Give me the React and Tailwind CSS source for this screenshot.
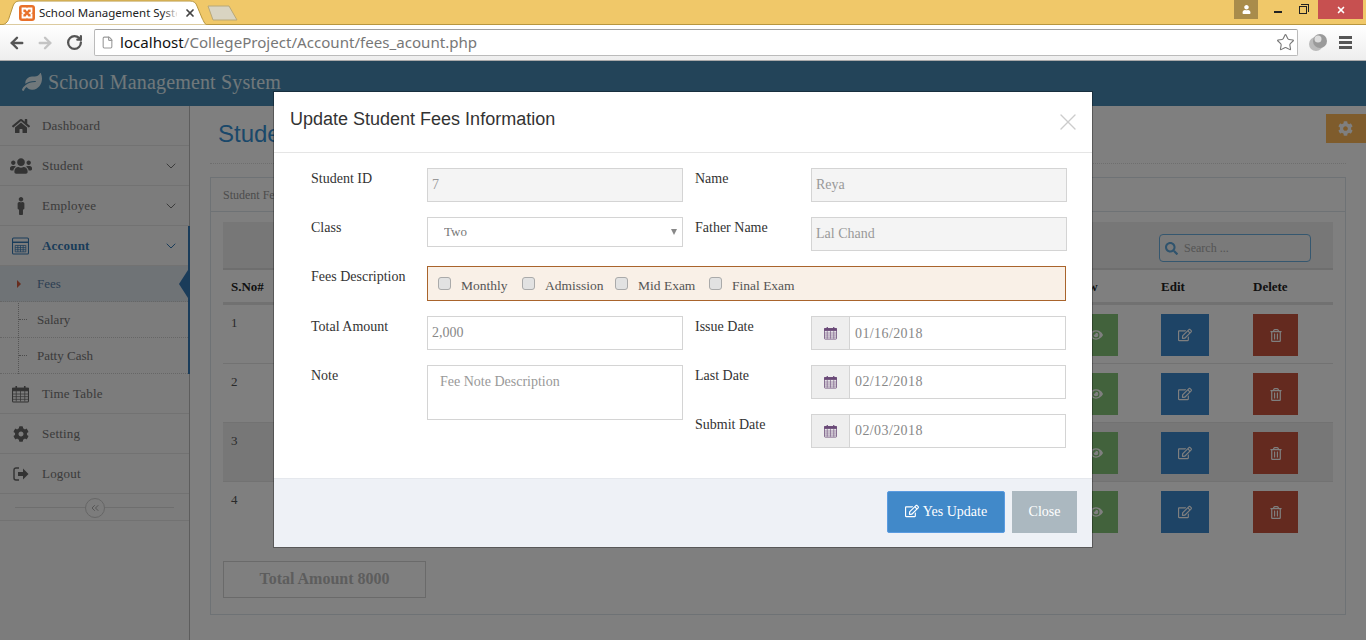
import React from 'react';
import { ArrowLeft, ArrowRight, RotateCw, Star, ChevronDown, ChevronsLeft, X, File } from 'lucide-react';
import { FaHome, FaUsers, FaMale, FaCog, FaLeaf, FaRegEdit, FaEye, FaRegTrashAlt, FaSearch, FaUser } from 'react-icons/fa';

const CalendarIcon = ({ className }) => (
  <svg viewBox="0 0 16 16" className={className} fill="none" stroke="currentColor">
    <rect x="0.5" y="2.5" width="15" height="13" rx="1" />
    <path d="M0.5 2.5h15v2.5h-15z" fill="currentColor" />
    <path d="M0.5 8h15M0.5 10.5h15M0.5 13h15M4 5v10M8 5v10M12 5v10" strokeWidth="0.7" />
    <path d="M4 0.5v3M12 0.5v3" strokeWidth="1.5" />
  </svg>
);

const CalculatorIcon = ({ className }) => (
  <svg viewBox="0 0 16 16" className={className} fill="none" stroke="currentColor">
    <rect x="0.5" y="0.5" width="15" height="15" rx="1" />
    <path d="M0.5 4.5h15" strokeWidth="1.4" />
    <path d="M3 7.5h10v6h-10zM3 9.5h10M3 11.5h10M5.5 7.5v6M8 7.5v6M10.5 7.5v6" strokeWidth="0.7" />
  </svg>
);

const LogoutIcon = ({ className }) => (
  <svg viewBox="0 0 16 16" className={className}>
    <path d="M6 2H3a2 2 0 0 0-2 2v8a2 2 0 0 0 2 2h3" fill="none" stroke="currentColor" strokeWidth="1.4" />
    <path d="M5 6h5V2.5L15.5 8 10 13.5V10H5z" fill="currentColor" />
  </svg>
);

const menu = [
  { label: 'Dashboard', icon: <FaHome className="w-[18px] h-[18px]" /> },
  { label: 'Student', icon: <FaUsers className="w-[22px] h-[22px]" />, arrow: true },
  { label: 'Employee', icon: <FaMale className="w-[18px] h-[18px]" />, arrow: true },
];
const menuBottom = [
  { label: 'Time Table', icon: <CalendarIcon className="w-[17px] h-[18px]" /> },
  { label: 'Setting', icon: <FaCog className="w-4 h-4" /> },
  { label: 'Logout', icon: <LogoutIcon className="w-4 h-4" /> },
];

const MenuRow = ({ item }) => (
  <div className="h-10 flex items-center border-b border-[#e4e4e4] text-[13px] tracking-[0.2px] text-[#777]">
    <span className="w-[42px] flex justify-center pl-[1px] pr-[2px] text-[#666]">{item.icon}</span>
    <span className="flex-1">{item.label}</span>
    {item.arrow && <ChevronDown className="w-4 h-4 mr-[10px] text-[#777]" strokeWidth={1.5} />}
  </div>
);

const SubRow = ({ label, active }) => (
  <div className={`relative h-9 flex items-center pl-[37px] text-[13px] border-b border-dotted border-[#ccc] ${active ? 'bg-[#dfe6ed] text-[#5a7fa5]' : 'text-[#777]'}`}>
    {active ? (
      <span className="absolute left-[17px] top-[14px] w-0 h-0 border-y-4 border-y-transparent border-l-4 border-l-[#d05a3c]" />
    ) : (
      <span className="absolute left-[19px] top-[17px] w-2 border-t border-dotted border-[#999]" />
    )}
    {label}
    {active && <span className="absolute right-0 top-[4px] w-0 h-0 border-y-[14px] border-y-transparent border-r-[9px] border-r-[#3478b4]" />}
  </div>
);

const rows = [
  { n: 1, line: true },
  { n: 2, line: true },
  { n: 3, line: true, alt: true },
  { n: 4 },
];

const ActionCells = () => (
  <>
    <div className="w-[91px]">
      <span className="w-[48px] h-[42px] bg-[#84c478] text-white flex items-center justify-center"><FaEye className="w-[14px] h-[14px] ml-[3px]" /></span>
    </div>
    <div className="w-[92px]">
      <span className="w-[48px] h-[42px] bg-[#3d88cc] text-white flex items-center justify-center"><FaRegEdit className="w-[14px] h-[14px]" /></span>
    </div>
    <div className="w-[80px]">
      <span className="w-[45px] h-[42px] bg-[#c8553f] text-white flex items-center justify-center"><FaRegTrashAlt className="w-[12px] h-[13px]" /></span>
    </div>
  </>
);

const Label = ({ children, right }) => (
  <div className={`pt-px text-[14px] leading-5 text-[#333] ${right ? 'pl-3' : ''}`}>{children}</div>
);

const ReadInput = ({ value }) => (
  <input readOnly value={value} className="w-full h-[34px] px-1 border border-[#d4d4d4] bg-[#f4f4f4] text-[14px] text-[#999] outline-none" />
);

const DateInput = ({ value, raised }) => (
  <div className="flex w-[255px] h-[34px] border border-[#d4d4d4]">
    <span className="w-[38px] bg-[#eee] border-r border-[#d4d4d4] flex items-center justify-center text-[#6a4a78]">
      <CalendarIcon className="w-[13px] h-[14px]" />
    </span>
    <input readOnly value={value} className={`flex-1 min-w-0 px-[5px] text-[14px] tracking-[0.4px] text-[#888] outline-none ${raised ? 'pb-[2px]' : ''}`} />
  </div>
);

const Check = ({ label, className }) => (
  <label className={`flex items-center text-[13.5px] text-[#555] ${className}`}>
    <input type="checkbox" className="appearance-none w-[13px] h-[13px] mr-[10px] mt-[-1px] rounded-[3px] border border-[#aaa] bg-[#e2e2e2]" />
    <span className="mt-[5px]">{label}</span>
  </label>
);

const BrowserChrome = () => (
  <div className="h-[61px] shrink-0 font-['Noto_Sans',sans-serif]">
    <div className="h-[25px] bg-[#f0c869] border-b border-[#b8963f] flex items-start">
      <div className="relative w-[208px] h-[25px] flex items-center pl-[19px] text-[11.5px] text-[#222]">
        <svg viewBox="0 0 208 25" className="absolute inset-0 w-[208px] h-[25px]">
          <path d="M0 25C5 25 8 22 9 18L13 6C14 3 16 1 19 1L190 1C194 1 196 3 197 6L202 18C204 22 205 25 208 25Z" fill="#fff" stroke="#b8963f" />
        </svg>
        <svg viewBox="0 0 16 16" className="relative w-4 h-4 mr-1">
          <rect width="16" height="16" rx="3" fill="#e8702a" />
          <path d="M3.5 3.5h3.5l1 1.5 1-1.5h3.5v3.5l-1.5 1 1.5 1v3.5H9l-1-1.5-1 1.5H3.5V9L5 8 3.5 7z" fill="none" stroke="#fff" strokeWidth="1.8" />
        </svg>
        <span className="relative w-[138px] overflow-hidden whitespace-nowrap">School Management System</span>
        <span className="absolute left-[163px] top-[4px] w-[16px] h-[18px] bg-gradient-to-r from-transparent to-white" />
        <X className="relative w-3 h-3 ml-[7px] text-[#444]" strokeWidth={3.5} />
      </div>
      <svg viewBox="0 0 32 16" className="w-8 h-4 mt-[5px] -ml-[1px]">
        <path d="M1 1H22L30 15H6Z" fill="#d9d4c2" stroke="#b8a878" />
      </svg>
      <div className="ml-auto flex items-start mr-[3px]">
        <span className="w-6 h-[19px] bg-[#a98c4b] flex items-center justify-center text-white"><FaUser className="w-[9px] h-[9px]" /></span>
        <span className="w-[60px] h-[19px] relative">
          <span className="absolute left-[16px] top-[11px] w-2 h-[2px] bg-[#222]" />
          <span className="absolute left-[41px] top-[6px] w-2 h-2 border border-[#222] bg-[#f0c869]" />
          <span className="absolute left-[43px] top-[4px] w-2 h-2 border-t border-r border-[#222]" />
        </span>
        <span className="w-[45px] h-[19px] bg-[#c75050] flex items-center justify-center text-white"><X className="w-[10px] h-[10px]" strokeWidth={4} /></span>
      </div>
    </div>
    <div className="h-9 bg-gradient-to-b from-white to-[#eee] border-b border-[#aaa] flex items-center">
      <ArrowLeft className="w-[18px] h-[18px] ml-2 text-[#555]" strokeWidth={3.2} />
      <ArrowRight className="w-[18px] h-[18px] ml-[10px] text-[#c4c4c4]" strokeWidth={3.2} />
      <RotateCw className="w-[17px] h-[17px] ml-[12px] text-[#555]" strokeWidth={3.2} />
      <div className="ml-[11px] w-[1204px] h-[27px] bg-white border border-[#bbb] border-t-[#a0a0a0] rounded-[2px] flex items-center text-[15.1px]">
        <File className="w-[13px] h-[15px] ml-[6px] mr-[6px] text-[#999]" />
        <span className="text-[#111]">localhost</span>
        <span className="text-[#777]">/CollegeProject/Account/fees_acount.php</span>
        <Star className="ml-auto mr-[2px] w-[19px] h-[19px] text-[#777]" strokeWidth={1.4} />
      </div>
      <svg viewBox="0 0 20 20" className="w-5 h-5 ml-[10px]">
        <circle cx="8" cy="11" r="7" fill="#bbb" />
        <circle cx="12" cy="8" r="7" fill="#9a9a9a" />
        <circle cx="10" cy="6" r="3.5" fill="#ddd" />
      </svg>
      <span className="ml-[11px] w-[13px] flex flex-col gap-[2px]">
        <span className="h-[3px] bg-[#555]" />
        <span className="h-[3px] bg-[#555]" />
        <span className="h-[3px] bg-[#555]" />
      </span>
    </div>
  </div>
);

const Sidebar = () => (
  <aside className="w-[190px] shrink-0 bg-[#f8f8f8] border-r border-[#bbb]">
    {menu.map((item) => <MenuRow key={item.label} item={item} />)}
    <div className="border-r-2 border-[#3478b4] -mr-[1px]">
      <div className="h-10 flex items-center border-b border-[#e4e4e4] text-[13px] tracking-[0.2px] font-bold text-[#3478b4]">
        <span className="w-[42px] flex justify-center pr-[2px]"><CalculatorIcon className="w-[17px] h-[18px]" /></span>
        <span className="flex-1">Account</span>
        <ChevronDown className="w-4 h-4 mr-[9px]" strokeWidth={1.5} />
      </div>
      <div className="relative">
        <span className="absolute left-[18px] top-0 bottom-0 border-l border-dotted border-[#aaa]" />
        <SubRow label="Fees" active />
        <SubRow label="Salary" />
        <SubRow label="Patty Cash" />
      </div>
    </div>
    {menuBottom.map((item) => <MenuRow key={item.label} item={item} />)}
    <div className="relative h-[27px] flex items-center px-[15px] border-b border-[#e4e4e4]">
      <span className="flex-1 border-t border-[#ddd]" />
      <span className="absolute left-[85px] top-[4px] w-5 h-5 rounded-full border border-[#ccc] bg-[#f8f8f8] flex items-center justify-center text-[#aaa]">
        <ChevronsLeft className="w-3 h-3" />
      </span>
    </div>
  </aside>
);

const Content = () => (
  <main className="flex-1 min-w-0 pl-5 pr-5 relative">
    <h1 className="pl-[8px] h-[58px] pt-[13px] font-['Liberation_Sans',sans-serif] text-[24px] leading-[30px] text-[#3590d4] border-b border-dotted border-[#ddd]">Student Fees</h1>
    <span className="absolute right-0 top-[8px] w-10 h-[29px] bg-[#feb958] flex items-center justify-center text-white pr-[2px]"><FaCog className="w-[15px] h-[15px]" /></span>
    <section className="mt-[13px] h-[438px] border border-[#dce4ea] px-3">
      <div className="-mx-3 h-[34px] px-3 flex items-center border-b border-[#dce4ea] text-[12px] text-[#999]">Student Fees</div>
      <div className="mt-[10px] h-[48px] bg-[#eee] border-b-2 border-[#ddd] flex items-center justify-end pr-[22px] pt-[6px]">
        <div className="w-[152px] h-[28px] border border-[#6aaede] rounded-[4px] bg-[#f4f4f4] flex items-center pl-[5px] text-[12px] text-[#aaa]">
          <FaSearch className="w-[13px] h-[13px] mr-[6px] text-[#5ea6da]" />
          Search ...
        </div>
      </div>
      <div className="h-[35px] flex items-center pt-[2px] border-b-[3px] border-[#e2e2e2] text-[13px] font-bold text-[#222]">
        <span className="w-[847px] pl-2">S.No#</span>
        <span className="w-[91px]">View</span>
        <span className="w-[92px]">Edit</span>
        <span className="w-[80px]">Delete</span>
      </div>
      {rows.map((r) => (
        <div key={r.n} className={`h-[59px] flex pt-[9px] ${r.line ? 'border-b border-[#e4e4e4]' : ''} ${r.alt ? 'bg-[#efefef]' : ''}`}>
          <div className="w-[847px] pl-2 -mt-px text-[13px] text-[#555]">{r.n}</div>
          <ActionCells />
        </div>
      ))}
      <div className="mt-[20px] w-[203px] h-[37px] pb-[2px] border border-[#d4d4d4] flex items-center justify-center text-[16px] font-bold text-[#bbb]">Total Amount 8000</div>
    </section>
  </main>
);

const Modal = () => (
  <div className="absolute left-[274px] top-[31px] w-[818px] bg-white shadow-[0_0_0_1px_rgba(0,0,0,0.3)]">
    <div className="h-[61px] border-b border-[#e5e5e5] flex items-center justify-between pl-4 pr-[10px]">
      <h2 className="pb-[6px] font-['Liberation_Sans',sans-serif] text-[18px] text-[#333]">Update Student Fees Information</h2>
      <X className="w-7 h-7 text-[#ccc]" strokeWidth={1.2} />
    </div>
    <div className="grid grid-cols-[116px_256px_128px_256px] gap-y-[15px] items-start pl-[37px] pt-[15px] pb-[30px]">
      <Label>Student ID</Label>
      <ReadInput value="7" />
      <Label right>Name</Label>
      <ReadInput value="Reya" />

      <Label>Class</Label>
      <div className="relative">
        <select defaultValue="Two" className="appearance-none w-full h-[30px] pl-4 border border-[#d4d4d4] bg-white text-[13px] text-[#777] outline-none">
          <option>Two</option>
        </select>
        <span className="absolute right-[6px] top-[12px] w-0 h-0 border-x-[3px] border-x-transparent border-t-[6px] border-t-[#888]" />
      </div>
      <Label right>Father Name</Label>
      <ReadInput value="Lal Chand" />

      <Label>Fees Description</Label>
      <div className="col-span-3 w-[639px] h-[35px] border border-[#a9642c] bg-[#f9f0e7] flex items-center pl-[10px]">
        <Check label="Monthly" className="w-[84px]" />
        <Check label="Admission" className="w-[93px]" />
        <Check label="Mid Exam" className="w-[94px]" />
        <Check label="Final Exam" />
      </div>

      <Label>Total Amount</Label>
      <input readOnly value="2,000" className="w-full h-[34px] px-1 border border-[#d4d4d4] text-[14px] text-[#888] outline-none" />
      <Label right>Issue Date</Label>
      <DateInput value="01/16/2018" />

      <Label>Note</Label>
      <textarea readOnly placeholder="Fee Note Description" className="row-span-2 w-full h-[55px] px-3 py-[5px] resize-none border border-[#d4d4d4] text-[14px] placeholder:text-[#999] outline-none" />
      <Label right>Last Date</Label>
      <DateInput value="02/12/2018" raised />

      <div />
      <Label right>Submit Date</Label>
      <DateInput value="02/03/2018" raised />
    </div>
    <div className="h-[69px] bg-[#eef1f6] border-t border-[#e5e8ed] flex items-start justify-end gap-[7px] pt-[12px] pr-[15px]">
      <button className="w-[118px] h-[42px] pb-[2px] bg-[#4189c9] border border-[#5a9be0] rounded-[2px] text-[14px] text-white flex items-center justify-center gap-1">
        <FaRegEdit className="w-[14px] h-[14px]" />
        Yes Update
      </button>
      <button className="w-[65px] h-[42px] pb-[2px] bg-[#abb8c0] text-[14px] text-white">Close</button>
    </div>
  </div>
);

export default function App() {
  return (
    <div className="w-[1366px] h-[640px] overflow-hidden flex flex-col bg-white font-['Liberation_Serif',serif]">
      <BrowserChrome />
      <div className="relative flex-1 min-h-0 flex flex-col overflow-hidden">
        <header className="h-[45px] shrink-0 bg-[#4689b2] flex items-center pl-[22px] pb-1 text-[20px] tracking-[0.17px] text-[#e0f0f6]">
          <FaLeaf className="w-5 h-5 mr-[6px]" />
          School Management System
        </header>
        <div className="flex flex-1 min-h-0">
          <Sidebar />
          <Content />
        </div>
        <div className="absolute inset-0 bg-black/50" />
        <Modal />
      </div>
    </div>
  );
}
